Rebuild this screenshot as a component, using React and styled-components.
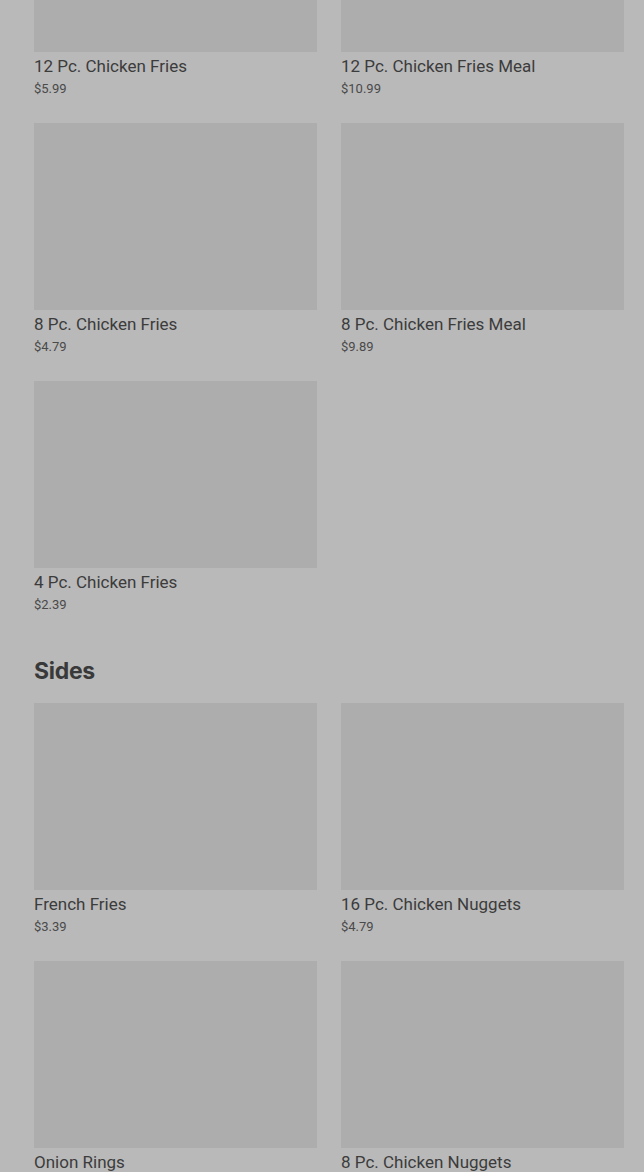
import React from 'react';
import styled, { createGlobalStyle } from 'styled-components';

const GlobalStyle = createGlobalStyle`
  html, body {
    margin: 0;
    background: #b9b9b9;
    overflow: hidden;
  }
  body {
    font-family: Roboto, 'Liberation Sans', sans-serif;
  }
`;

const sections = [
  {
    title: null,
    items: [
      { name: '12 Pc. Chicken Fries', price: '$5.99' },
      { name: '12 Pc. Chicken Fries Meal', price: '$10.99' },
      { name: '8 Pc. Chicken Fries', price: '$4.79' },
      { name: '8 Pc. Chicken Fries Meal', price: '$9.89' },
      { name: '4 Pc. Chicken Fries', price: '$2.39' },
    ],
  },
  {
    title: 'Sides',
    items: [
      { name: 'French Fries', price: '$3.39' },
      { name: '16 Pc. Chicken Nuggets', price: '$4.79' },
      { name: 'Onion Rings', price: '$3.19' },
      { name: '8 Pc. Chicken Nuggets', price: '$2.69' },
    ],
  },
];

export default function App() {
  return (
    <>
      <GlobalStyle />
      <Page>
        {sections.map((section, i) => (
          <Section key={i}>
            {section.title && <Heading>{section.title}</Heading>}
            <Grid>
              {section.items.map(item => (
                <Card key={item.name}>
                  <Thumb />
                  <Name>{item.name}</Name>
                  <Price>{item.price}</Price>
                </Card>
              ))}
            </Grid>
          </Section>
        ))}
      </Page>
    </>
  );
}

const Page = styled.div`
  margin-top: -135px;
  padding: 0 20px 40px 34px;
`;

const Section = styled.section`
  & + & {
    margin-top: 40px;
  }
`;

const Heading = styled.h2`
  margin: 0 0 16px;
  font-family: Inter, Roboto, sans-serif;
  font-size: 23px;
  line-height: 32px;
  font-weight: 700;
  color: #393939;
  letter-spacing: -0.3px;
`;

const Grid = styled.div`
  display: grid;
  grid-template-columns: 283px 283px;
  column-gap: 24px;
  row-gap: 24px;
`;

const Card = styled.div`
  display: flex;
  flex-direction: column;
`;

const Thumb = styled.div`
  height: 187px;
  background: #adadad;
`;

const Name = styled.div`
  margin-top: 2px;
  font-size: 17px;
  line-height: 24px;
  color: #3c3c3c;
`;

const Price = styled.div`
  margin-top: 1px;
  font-size: 13px;
  line-height: 20px;
  color: #4a4a4a;
`;
